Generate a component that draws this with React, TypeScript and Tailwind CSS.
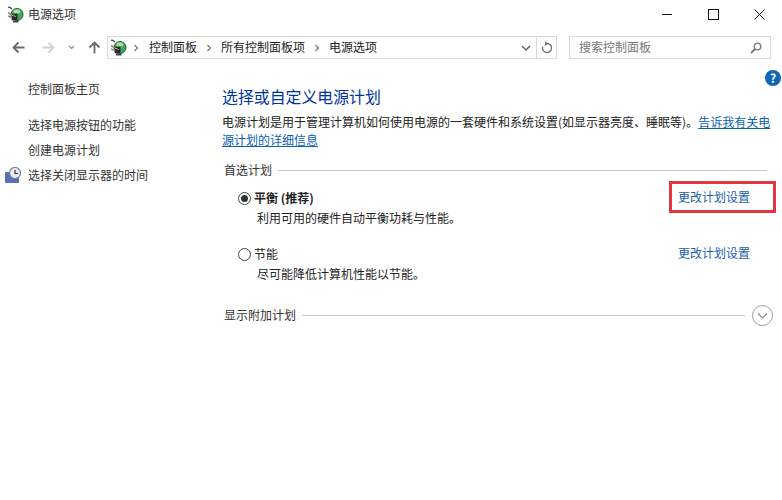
import React from "react";

const font = { fontFamily: '"Noto Sans CJK SC", "Liberation Sans", sans-serif' };

function PowerIcon({ size = 17 }: { size?: number }) {
  return (
    <svg width={size} height={size} viewBox="0 0 17 17" className="shrink-0">
      <path d="M1 1.500c1.500-1 3 .5 4 1.500" fill="none" stroke="#3d3d3d" strokeWidth="1.200" />
      <circle cx="10" cy="8.500" r="6" fill="#46a35c" stroke="#1f5c33" strokeWidth="1" />
      <path d="M6.500 4.500c2-1.800 5-1.800 7 .5l-1 2.500-3-.5-1 1.500-2-1z" fill="#a9e0a4" />
      <rect x="4.500" y="7.500" width="6" height="7" rx="1.500" fill="#2b2b2b" />
      <path d="M5 9.500c2 0 3 .5 4 1.500" stroke="#b8b8b8" strokeWidth="1" fill="none" />
      <path d="M1 6.500l4 2.500M1 10l4 1.500" stroke="#8a8a8a" strokeWidth="1.500" />
      <path d="M9 14.500h2.500V16.500H6V15z" fill="#444" />
    </svg>
  );
}

function Chevron() {
  return (
    <svg width="6" height="8" viewBox="0 0 6 8" className="shrink-0">
      <path d="M1.500 1l3 3-3 3" fill="none" stroke="#777" strokeWidth="1.200" />
    </svg>
  );
}

function Arrow({ color, dir }: { color: string; dir: "l" | "r" | "u" }) {
  const d =
    dir === "l"
      ? "M12.500 6.500H1.500M6.500 1.500l-5 5 5 5"
      : dir === "r"
      ? "M.5 6.500h11M6.500 1.500l5 5-5 5"
      : "M6.500 12.500V1.500M1.500 6.500l5-5 5 5";
  return (
    <svg width="13" height="13" viewBox="0 0 13 13" className="shrink-0">
      <path d={d} fill="none" stroke={color} strokeWidth="1.800" />
    </svg>
  );
}

function Radio({ on }: { on?: boolean }) {
  return (
    <svg width="13" height="13" viewBox="0 0 13 13" className="shrink-0">
      <circle cx="6.500" cy="6.500" r="6" fill="#fff" stroke="#444" strokeWidth="1" />
      {on && <circle cx="6.500" cy="6.500" r="3.500" fill="#333" />}
    </svg>
  );
}

function Plan({
  name,
  desc,
  on,
  boxed,
}: {
  name: string;
  desc: string;
  on?: boolean;
  boxed?: boolean;
}) {
  return (
    <div className="flex h-[56px] items-start">
      <div className="ml-[16px] w-[415px]">
        <div className="flex h-[18px] items-center gap-[3px]">
          <Radio on={on} />
          <span className={on ? "font-bold text-[#222]" : "text-[#222]"}>{name}</span>
        </div>
        <div className="mt-[2px] ml-[19px] h-[18px] leading-[18px] text-[#222]">{desc}</div>
      </div>
      <div
        className={
          boxed
            ? "ml-[16px] -mt-[8px] flex h-[32px] w-[107px] items-center border-[3px] border-[#e0383e] pl-[6px] text-[#1a5fa8]"
            : "ml-[16px] -mt-[8px] flex h-[32px] w-[107px] items-center border-[3px] border-transparent pl-[6px] text-[#1a5fa8]"
        }
      >
        更改计划设置
      </div>
    </div>
  );
}

export default function App() {
  return (
    <div className="flex h-[500px] w-[782px] flex-col overflow-hidden bg-white text-[12px] leading-[18px]" style={font}>
      {/* Title bar */}
      <div className="flex h-[28px] items-center">
        <div className="ml-[7px] flex items-center gap-[4px]">
          <PowerIcon />
          <span className="text-[#333]">电源选项</span>
        </div>
        <div className="ml-auto flex items-center">
          <div className="flex h-[28px] w-[46px] items-center justify-center">
            <div className="h-[1px] w-[10px] bg-[#111]" />
          </div>
          <div className="flex h-[28px] w-[46px] items-center justify-center">
            <div className="h-[11px] w-[11px] border border-[#111]" />
          </div>
          <div className="flex h-[28px] w-[46px] items-center justify-center">
            <svg width="11" height="11" viewBox="0 0 11 11">
              <path d="M.5.5l10 10M10.500.5l-10 10" stroke="#111" strokeWidth="1" />
            </svg>
          </div>
        </div>
      </div>

      {/* Address bar */}
      <div className="mt-[8px] flex h-[23px] items-center">
        <div className="ml-[12px] flex w-[95px] items-center">
          <Arrow dir="l" color="#6b6b6b" />
          <div className="ml-[17px]"><Arrow dir="r" color="#d0d0d0" /></div>
          <svg width="7" height="5" viewBox="0 0 7 5" className="ml-[13px] shrink-0">
            <path d="M1 1l2.500 2.500L6 1" fill="none" stroke="#8a8a8a" strokeWidth="1.200" />
          </svg>
          <div className="ml-[13px]"><Arrow dir="u" color="#6b6b6b" /></div>
        </div>
        <div className="flex h-[23px] w-[450px] items-center border border-[#d9d9d9]">
          <div className="ml-[2px]"><PowerIcon /></div>
          <div className="ml-[6px]"><Chevron /></div>
          <span className="ml-[10px] -translate-y-px text-[#222]">控制面板</span>
          <div className="ml-[9px]"><Chevron /></div>
          <span className="ml-[9px] -translate-y-px text-[#222]">所有控制面板项</span>
          <div className="ml-[9px]"><Chevron /></div>
          <span className="ml-[9px] -translate-y-px text-[#222]">电源选项</span>
          <svg width="10" height="6" viewBox="0 0 10 6" className="ml-auto mr-[5px] shrink-0">
            <path d="M1 1l4 4 4-4" fill="none" stroke="#666" strokeWidth="1.500" />
          </svg>
          <div className="flex h-full w-[20px] items-center justify-center border-l border-[#d9d9d9]">
            <svg width="12" height="13" viewBox="0 0 12 13">
              <path d="M6 2.500a4.500 4.500 0 1 1-4.300 3.200" fill="none" stroke="#777" strokeWidth="1.400" />
              <path d="M4 .2L7.400 2.600 4 5z" fill="#777" />
            </svg>
          </div>
        </div>
        <div className="ml-[12px] flex h-[23px] w-[202px] items-center border border-[#d9d9d9] pl-[9px] pr-[8px]">
          <span className="-translate-y-px text-[#777]">搜索控制面板</span>
          <svg width="12" height="12" viewBox="0 0 12 12" className="ml-auto">
            <circle cx="7.500" cy="4.500" r="3.300" fill="none" stroke="#777" strokeWidth="1.300" />
            <path d="M5 7L1 11" stroke="#777" strokeWidth="1.800" />
          </svg>
        </div>
      </div>

      {/* Body */}
      <div className="relative flex flex-1">
        <div className="absolute right-[1px] top-[11px] flex h-[16px] w-[16px] items-center justify-center rounded-full bg-[#1067b5] text-[12px] font-bold text-white">
          ?
        </div>
        {/* Sidebar */}
        <div className="w-[222px] shrink-0 pt-[21px] text-[#333]">
          <div className="ml-[28px] h-[18px]">控制面板主页</div>
          <div className="mt-[18px] ml-[28px] h-[18px]">选择电源按钮的功能</div>
          <div className="mt-[7px] ml-[28px] h-[18px]">创建电源计划</div>
          <div className="mt-[7px] flex h-[18px] items-center">
            <svg width="17" height="17" viewBox="0 0 17 17" className="ml-[5px] shrink-0">
              <rect x="0" y="5" width="14" height="11" rx="1" fill="#5a70b5" />
              <circle cx="10" cy="6" r="5.500" fill="#e8edf2" stroke="#6e7f96" strokeWidth="1.200" />
              <path d="M10 3v3.500h3" fill="none" stroke="#333" strokeWidth="1.200" />
            </svg>
            <span className="ml-[6px]">选择关闭显示器的时间</span>
          </div>
        </div>

        {/* Main */}
        <div className="w-[555px] pt-[27px]">
          <div className="h-[22px] text-[15.9px] leading-[22px] text-[#003399]">选择或自定义电源计划</div>
          <div className="mt-[5px] w-[550px] text-[#222]">
            电源计划是用于管理计算机如何使用电源的一套硬件和系统设置(如显示器亮度、睡眠等)。
            <span className="text-[#0a5fb4] underline">告诉我有关电源计划的详细信息</span>
          </div>
          <div className="mt-[12px] ml-[2px] flex h-[18px] items-center gap-[6px] text-[#333]">
            <span>首选计划</span>
            <div className="h-[1px] w-[489px] bg-[#c8c8c8]" />
          </div>
          <div className="mt-[10px]">
            <Plan name="平衡 (推荐)" desc="利用可用的硬件自动平衡功耗与性能。" on boxed />
            <Plan name="节能" desc="尽可能降低计算机性能以节能。" />
          </div>
          <div className="mt-[3px] ml-[2px] flex h-[22px] items-center text-[#333]">
            <span>显示附加计划</span>
            <div className="ml-[6px] h-[1px] w-[443px] bg-[#c8c8c8]" />
            <svg width="21" height="21" viewBox="0 0 21 21" className="ml-[7px]">
              <circle cx="10.500" cy="10.500" r="10" fill="#fff" stroke="#9a9a9a" />
              <path d="M6 8.500l4.500 4.500L15 8.500" fill="none" stroke="#8a8a8a" strokeWidth="1.200" />
            </svg>
          </div>
        </div>
      </div>
    </div>
  );
}
